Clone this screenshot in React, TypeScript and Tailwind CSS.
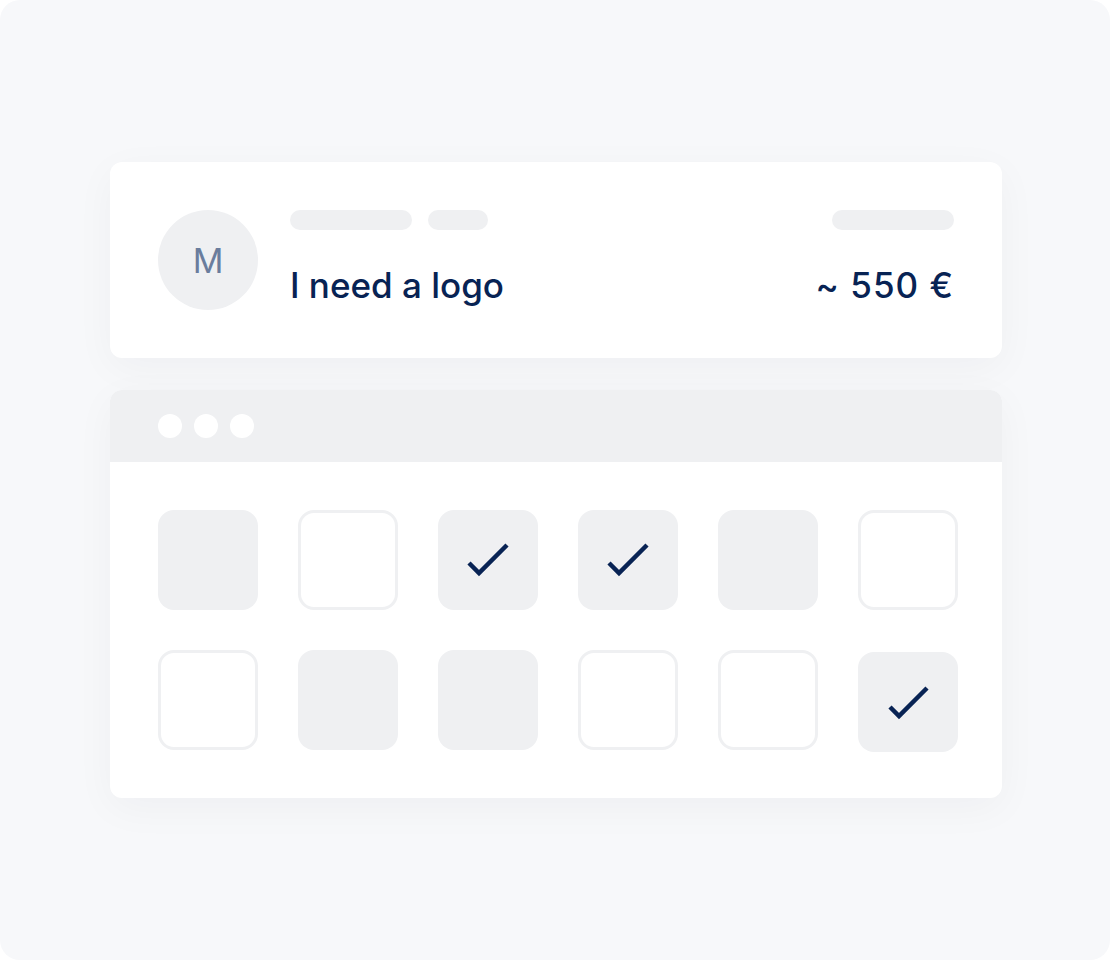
import React from 'react';

type Cell = { kind: 'filled' | 'outline'; check?: string; nudge?: boolean };

const cells: Cell[] = [
  { kind: 'filled' },
  { kind: 'outline' },
  { kind: 'filled', check: '31,53 41,63 69,35' },
  { kind: 'filled', check: '31,53 41,63 69,35' },
  { kind: 'filled' },
  { kind: 'outline' },
  { kind: 'outline' },
  { kind: 'filled' },
  { kind: 'filled' },
  { kind: 'outline' },
  { kind: 'outline' },
  { kind: 'filled', check: '32,55 41,64 69,36', nudge: true },
];

const Bar = ({ w }: { w: string }) => <div className={`h-5 rounded-full bg-[#eff0f2] ${w}`} />;

export default function App() {
  return (
    <div className="w-[1110px] h-[960px] bg-white">
      <div
        className="w-full h-full rounded-[20px] bg-[#f7f8fa] pl-[110px] pr-[108px] pt-[162px] flex flex-col gap-8"
        style={{ fontFamily: 'Inter, "Noto Sans", sans-serif' }}
      >
        {/* request card */}
        <div className="bg-white rounded-xl p-12 flex gap-8 shadow-[0_10px_40px_rgba(20,30,60,0.04)]">
          <div className="w-[100px] h-[100px] shrink-0 rounded-full bg-[#eff0f2] flex items-center justify-center text-[34px] text-[#6a7d9d]">
            M
          </div>
          <div className="flex-1 flex flex-col">
            <div className="flex items-center justify-between">
              <div className="flex gap-4">
                <Bar w="w-[122px]" />
                <Bar w="w-[60px]" />
              </div>
              <Bar w="w-[122px]" />
            </div>
            <div className="mt-[35px] flex items-center justify-between text-[35px] font-medium leading-[40px] text-[#082354]">
              <span>I need a logo</span>
              <span className="tracking-[1px]">~ 550 €</span>
            </div>
          </div>
        </div>

        {/* browser window */}
        <div className="bg-white rounded-xl overflow-hidden shadow-[0_10px_40px_rgba(20,30,60,0.04)]">
          <div className="h-[72px] bg-[#eff0f2] px-12 flex items-center gap-3">
            <div className="w-6 h-6 rounded-full bg-white" />
            <div className="w-6 h-6 rounded-full bg-white" />
            <div className="w-6 h-6 rounded-full bg-white" />
          </div>
          <div className="p-12 grid grid-cols-[repeat(6,100px)] gap-10">
            {cells.map((c, i) => (
              <div
                key={i}
                className={`w-[100px] h-[100px] rounded-2xl ${
                  c.kind === 'filled' ? 'bg-[#eff0f2]' : 'border-[3px] border-[#eff0f2] bg-white'
                } ${c.nudge ? 'translate-y-[2px]' : ''}`}
              >
                {c.check && (
                  <svg viewBox="0 0 100 100" className="w-full h-full">
                    <polyline
                      points={c.check}
                      fill="none"
                      stroke="#082354"
                      strokeWidth="4.5"
                      strokeLinejoin="miter"
                    />
                  </svg>
                )}
              </div>
            ))}
          </div>
        </div>
      </div>
    </div>
  );
}
